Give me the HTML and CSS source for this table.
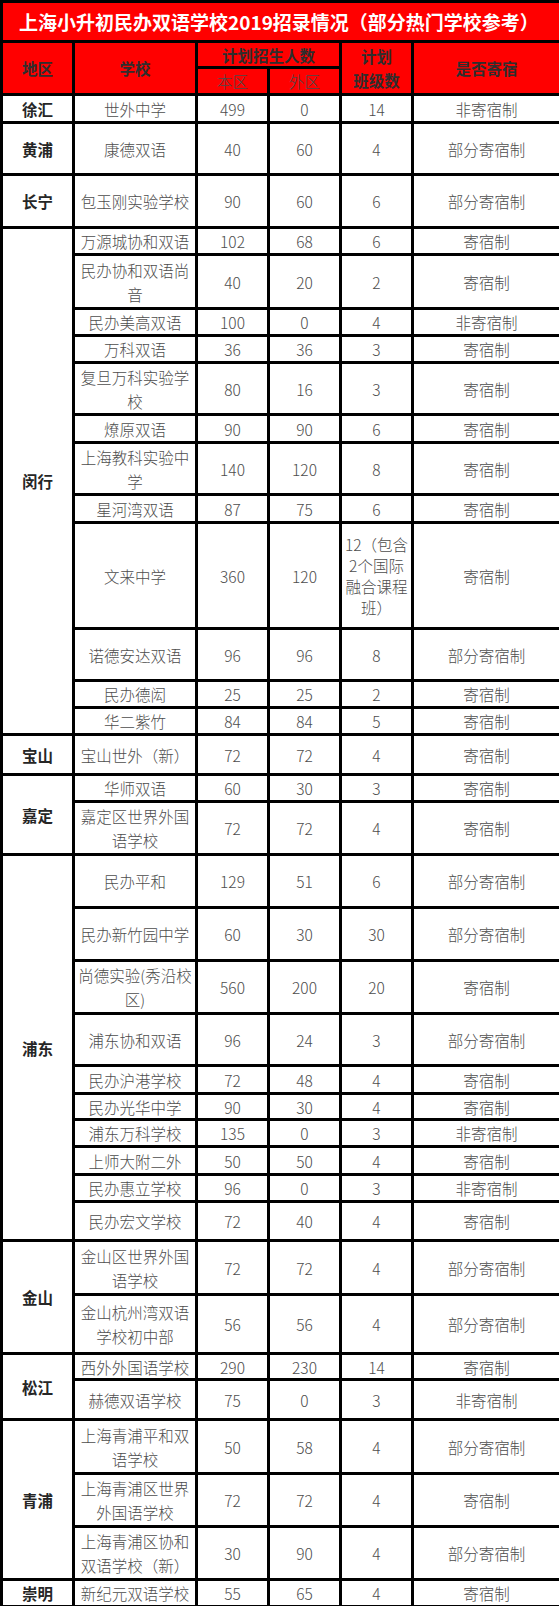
FILE: index.html
```html
<!DOCTYPE html>
<html lang="zh-CN">
<head>
<meta charset="utf-8">
<title>上海小升初民办双语学校2019招录情况</title>
<link rel="stylesheet" href="styles.css">
</head>
<body>
<table class="sheet">
  <colgroup>
    <col class="c-region">
    <col class="c-school">
    <col class="c-num">
    <col class="c-num">
    <col class="c-num">
    <col class="c-board">
  </colgroup>
  <thead>
    <tr class="title r40"><th colspan="6">上海小升初民办双语学校2019招录情况（部分热门学校参考）</th></tr>
    <tr class="head r26">
      <th rowspan="2">地区</th>
      <th rowspan="2">学校</th>
      <th colspan="2">计划招生人数</th>
      <th rowspan="2" class="two">计划<br>班级数</th>
      <th rowspan="2">是否寄宿</th>
    </tr>
    <tr class="head r27">
      <th class="sub">本区</th>
      <th class="sub">外区</th>
    </tr>
  </thead>
  <tbody>
    <tr class="r28"><td class="region">徐汇</td><td>世外中学</td><td>499</td><td>0</td><td>14</td><td>非寄宿制</td></tr>
    <tr class="r52"><td class="region">黄浦</td><td>康德双语</td><td>40</td><td>60</td><td>4</td><td>部分寄宿制</td></tr>
    <tr class="r53"><td class="region">长宁</td><td>包玉刚实验学校</td><td>90</td><td>60</td><td>6</td><td>部分寄宿制</td></tr>

    <tr class="r27"><td class="region" rowspan="12">闵行</td><td>万源城协和双语</td><td>102</td><td>68</td><td>6</td><td>寄宿制</td></tr>
    <tr class="r54"><td class="two">民办协和双语尚音</td><td>40</td><td>20</td><td>2</td><td>寄宿制</td></tr>
    <tr class="r27"><td>民办美高双语</td><td>100</td><td>0</td><td>4</td><td>非寄宿制</td></tr>
    <tr class="r27"><td>万科双语</td><td>36</td><td>36</td><td>3</td><td>寄宿制</td></tr>
    <tr class="r52"><td class="two">复旦万科实验学校</td><td>80</td><td>16</td><td>3</td><td>寄宿制</td></tr>
    <tr class="r28"><td>燎原双语</td><td>90</td><td>90</td><td>6</td><td>寄宿制</td></tr>
    <tr class="r52"><td class="two">上海教科实验中学</td><td>140</td><td>120</td><td>8</td><td>寄宿制</td></tr>
    <tr class="r28"><td>星河湾双语</td><td>87</td><td>75</td><td>6</td><td>寄宿制</td></tr>
    <tr class="r106"><td>文来中学</td><td>360</td><td>120</td><td class="multi">12（包含2个国际融合课程班）</td><td>寄宿制</td></tr>
    <tr class="r52"><td>诺德安达双语</td><td>96</td><td>96</td><td>8</td><td>部分寄宿制</td></tr>
    <tr class="r27"><td>民办德闳</td><td>25</td><td>25</td><td>2</td><td>寄宿制</td></tr>
    <tr class="r27"><td>华二紫竹</td><td>84</td><td>84</td><td>5</td><td>寄宿制</td></tr>

    <tr class="r40"><td class="region">宝山</td><td>宝山世外（新）</td><td>72</td><td>72</td><td>4</td><td>寄宿制</td></tr>

    <tr class="r27"><td class="region" rowspan="2">嘉定</td><td>华师双语</td><td>60</td><td>30</td><td>3</td><td>寄宿制</td></tr>
    <tr class="r53"><td class="two">嘉定区世界外国语学校</td><td>72</td><td>72</td><td>4</td><td>寄宿制</td></tr>

    <tr class="r53"><td class="region" rowspan="10">浦东</td><td>民办平和</td><td>129</td><td>51</td><td>6</td><td>部分寄宿制</td></tr>
    <tr class="r53"><td>民办新竹园中学</td><td>60</td><td>30</td><td>30</td><td>部分寄宿制</td></tr>
    <tr class="r53"><td class="two">尚德实验(秀沿校区)</td><td>560</td><td>200</td><td>20</td><td>寄宿制</td></tr>
    <tr class="r52"><td>浦东协和双语</td><td>96</td><td>24</td><td>3</td><td>部分寄宿制</td></tr>
    <tr class="r28"><td>民办沪港学校</td><td>72</td><td>48</td><td>4</td><td>寄宿制</td></tr>
    <tr class="r26"><td>民办光华中学</td><td>90</td><td>30</td><td>4</td><td>寄宿制</td></tr>
    <tr class="r27"><td>浦东万科学校</td><td>135</td><td>0</td><td>3</td><td>非寄宿制</td></tr>
    <tr class="r28"><td>上师大附二外</td><td>50</td><td>50</td><td>4</td><td>寄宿制</td></tr>
    <tr class="r27"><td>民办惠立学校</td><td>96</td><td>0</td><td>3</td><td>非寄宿制</td></tr>
    <tr class="r39"><td>民办宏文学校</td><td>72</td><td>40</td><td>4</td><td>寄宿制</td></tr>

    <tr class="r54"><td class="region" rowspan="2">金山</td><td class="two">金山区世界外国语学校</td><td>72</td><td>72</td><td>4</td><td>部分寄宿制</td></tr>
    <tr class="r59"><td class="two">金山杭州湾双语学校初中部</td><td>56</td><td>56</td><td>4</td><td>部分寄宿制</td></tr>

    <tr class="r26"><td class="region" rowspan="2">松江</td><td>西外外国语学校</td><td>290</td><td>230</td><td>14</td><td>寄宿制</td></tr>
    <tr class="r40"><td>赫德双语学校</td><td>75</td><td>0</td><td>3</td><td>非寄宿制</td></tr>

    <tr class="r54"><td class="region" rowspan="3">青浦</td><td class="two">上海青浦平和双语学校</td><td>50</td><td>58</td><td>4</td><td>部分寄宿制</td></tr>
    <tr class="r53"><td class="two">上海青浦区世界外国语学校</td><td>72</td><td>72</td><td>4</td><td>寄宿制</td></tr>
    <tr class="r53"><td class="two">上海青浦区协和双语学校（新）</td><td>30</td><td>90</td><td>4</td><td>部分寄宿制</td></tr>

    <tr class="r27"><td class="region">崇明</td><td>新纪元双语学校</td><td>55</td><td>65</td><td>4</td><td>寄宿制</td></tr>
  </tbody>
</table>
</body>
</html>
```

FILE: styles.css
```css
html, body {
  margin: 0;
  padding: 0;
  background: #ffffff;
}

.sheet {
  width: 559px;
  border-collapse: collapse;
  table-layout: fixed;
  font-family: "Noto Sans CJK SC", "Noto Sans", sans-serif;
  font-size: 15.5px;
  font-weight: 300;
  color: #4d4d4d;
}

.c-region { width: 72px; }
.c-school { width: 123px; }
.c-num { width: 72px; }
.c-board { width: 148px; }

.sheet th,
.sheet td {
  border: 3px solid #000;
  padding: 0;
  text-align: center;
  vertical-align: middle;
  line-height: 22px;
  font-weight: 300;
}

.sheet .two {
  line-height: 24px;
}

.title th {
  background: #ff0000;
  color: #ffffff;
  font-weight: bold;
  font-size: 19px;
  text-align: left;
  padding-left: 16px;
  white-space: nowrap;
}

.head th {
  background: #ff0000;
  color: #2e2e2e;
  font-weight: bold;
}

.head th.sub {
  font-weight: 300;
  color: #4a4a4a;
}

.sheet td.region {
  font-weight: bold;
  color: #262626;
}

.sheet td.multi {
  line-height: 21px;
}

.r26 { height: 26px; }
.r27 { height: 27px; }
.r28 { height: 28px; }
.r39 { height: 39px; }
.r40 { height: 40px; }
.r52 { height: 52px; }
.r53 { height: 53px; }
.r54 { height: 54px; }
.r59 { height: 59px; }
.r106 { height: 106px; }
```
